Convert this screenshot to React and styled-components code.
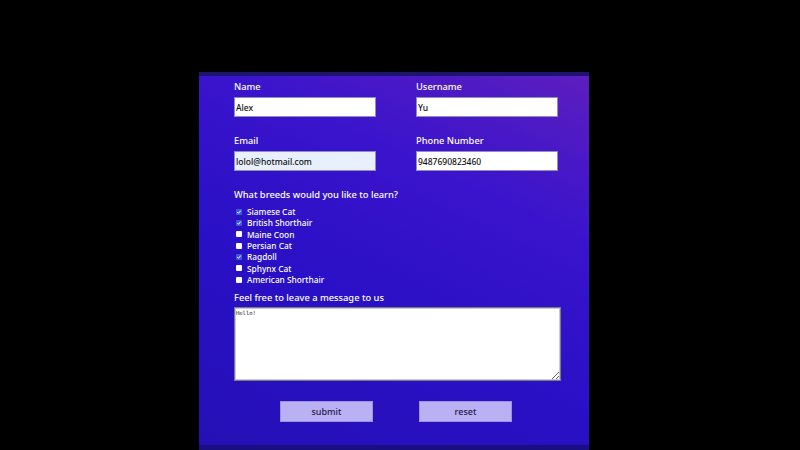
import React from "react";
import styled, { createGlobalStyle } from "styled-components";

const Global = createGlobalStyle`
  html, body { margin: 0; padding: 0; background: #000; }
  body { width: 800px; height: 450px; overflow: hidden; font-family: "Noto Sans", "Open Sans", sans-serif; }
`;

const Stage = styled.div`
  width: 800px;
  height: 450px;
  background: #000;
  padding-top: 72px;
  padding-left: 199px;
  box-sizing: border-box;
`;

const Panel = styled.form`
  width: 390px;
  height: 378px;
  box-sizing: border-box;
  border-top: 4px solid #1d1470;
  border-bottom: 5px solid #1a0f80;
  background: linear-gradient(205deg, #5c1ebf 0%, #3a14cc 30%, #2a10c6 60%, #2510b6 100%);
  display: flex;
  flex-direction: column;
  padding: 4px 0 0 35px;
`;

const Grid = styled.div`
  display: grid;
  grid-template-columns: 182px 142px;
  row-gap: 17px;
`;

const Field = styled.div`
  display: flex;
  flex-direction: column;
`;

const Label = styled.label`
  color: #fff;
  font-family: "Noto Sans", "Open Sans", sans-serif;
  font-size: 9.3px;
  font-weight: 500;
  line-height: 14px;
  margin-bottom: ${(p) => p.$mb ?? 3}px;
`;

const TextInput = styled.input`
  width: 142px;
  height: 20px;
  box-sizing: border-box;
  border: 1px solid #8f8cc8;
  background: ${(p) => (p.$autofill ? "#e8effd" : "#fff")};
  padding: 0 1px;
  font-family: "Noto Sans", "Open Sans", sans-serif;
  font-size: 8.5px;
  font-weight: 500;
  color: #111;
  outline: none;
`;

const Section = styled.div`
  margin-top: ${(p) => p.$mt}px;
  display: flex;
  flex-direction: column;
`;

const List = styled.div`
  display: flex;
  flex-direction: column;
  margin-top: 1px;
`;

const Row = styled.div`
  display: flex;
  align-items: center;
  height: 11.33px;
  padding-left: 2px;
  gap: 5px;
  color: #fff;
  font-size: 8.3px;
  font-weight: 500;
`;

const Box = styled.span`
  width: 6px;
  height: 6px;
  background: #fff;
  border-radius: 1px;
  flex: none;
`;

const TextArea = styled.textarea`
  width: 327px;
  height: 74px;
  box-sizing: border-box;
  border: 1px solid #7b7b86;
  box-shadow: inset 0 0 0 1px #c9c9d6;
  background: #fff;
  font-family: "DejaVu Sans Mono", monospace;
  font-size: 5.5px;
  padding: 2px 1px;
  color: #222;
  resize: both;
`;

const Buttons = styled.div`
  display: flex;
  gap: 46px;
  margin-top: 20px;
  padding-left: 46px;
`;

const Button = styled.button`
  width: 93px;
  height: 21px;
  background: #bab0f4;
  border: 1px solid #9c92e0;
  color: #1f1a48;
  font-family: "Noto Sans", "Open Sans", sans-serif;
  font-size: 9px;
  font-weight: 500;
  padding: 0;
`;

const Check = () => (
  <svg width="6" height="6" viewBox="0 0 6 6">
    <rect width="6" height="6" rx="1" fill="#3b5bd6" />
    <path d="M1.3 3.1 L2.5 4.3 L4.7 1.6" stroke="#fff" strokeWidth="1" fill="none" />
  </svg>
);

const breeds = [
  ["Siamese Cat", true],
  ["British Shorthair", true],
  ["Maine Coon", false],
  ["Persian Cat", false],
  ["Ragdoll", true],
  ["Sphynx Cat", false],
  ["American Shorthair", false],
];

export default function App() {
  return (
    <Stage>
      <Global />
      <Panel onSubmit={(e) => e.preventDefault()}>
        <Grid>
          <Field>
            <Label>Name</Label>
            <TextInput defaultValue="Alex" />
          </Field>
          <Field>
            <Label>Username</Label>
            <TextInput defaultValue="Yu" />
          </Field>
          <Field>
            <Label>Email</Label>
            <TextInput $autofill defaultValue="lolol@hotmail.com" />
          </Field>
          <Field>
            <Label>Phone Number</Label>
            <TextInput defaultValue="9487690823460" />
          </Field>
        </Grid>
        <Section $mt={17}>
          <Label>What breeds would you like to learn?</Label>
          <List>
            {breeds.map(([name, on]) => (
              <Row key={name}>
                {on ? <Check /> : <Box />}
                <span>{name}</span>
              </Row>
            ))}
          </List>
        </Section>
        <Section $mt={6}>
          <Label $mb={2}>Feel free to leave a message to us</Label>
          <TextArea defaultValue="Hello!" />
        </Section>
        <Buttons>
          <Button type="submit">submit</Button>
          <Button type="reset">reset</Button>
        </Buttons>
      </Panel>
    </Stage>
  );
}
